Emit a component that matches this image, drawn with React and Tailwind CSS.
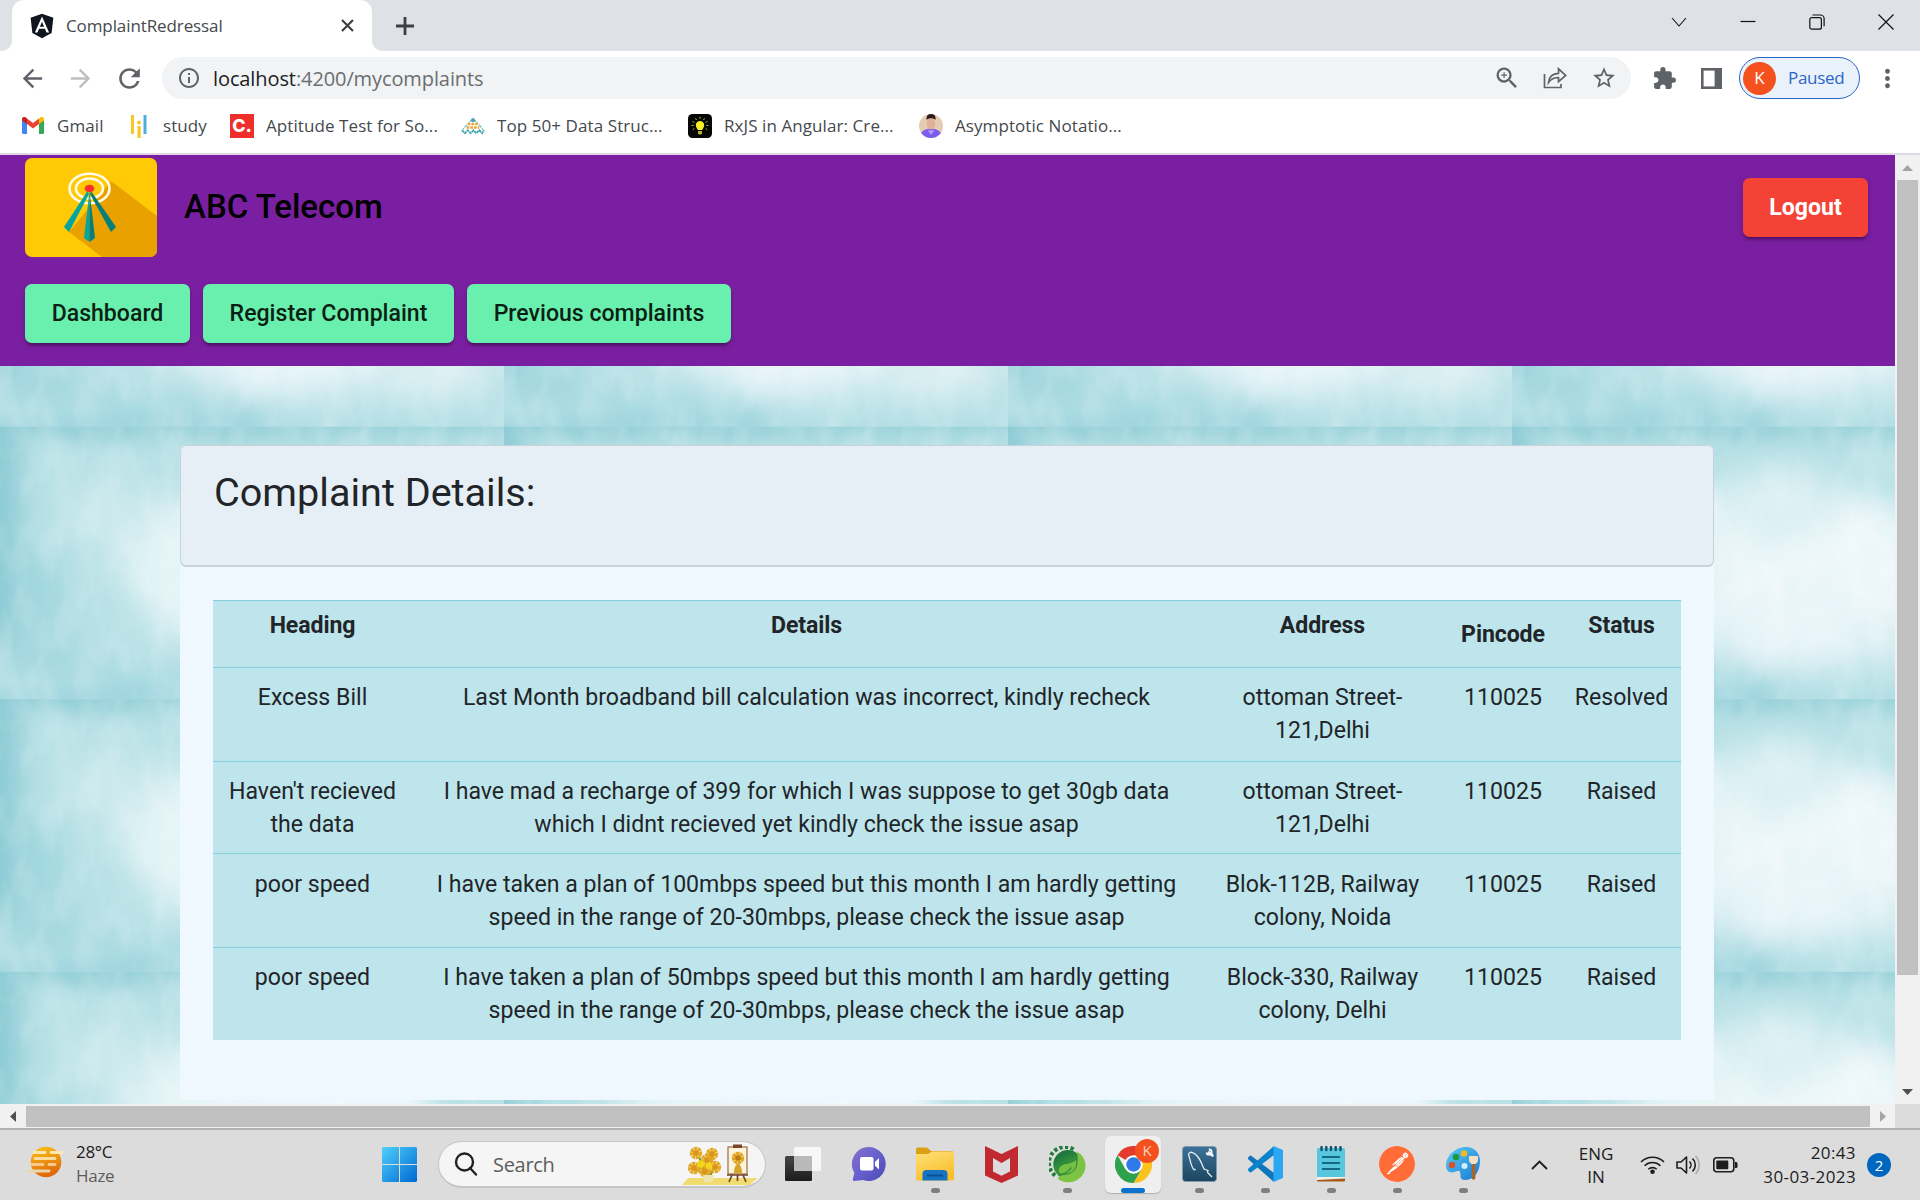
import React from "react";
import {
  MdArrowBack,
  MdArrowForward,
  MdRefresh,
  MdInfoOutline,
  MdZoomIn,
  MdStarBorder,
  MdExtension,
  MdMoreVert,
} from "react-icons/md";
import { FaAngular } from "react-icons/fa";
import { SiPostman } from "react-icons/si";

const UI = "font-['Open_Sans','Noto_Sans',sans-serif]";

/* ---------- Browser tab strip ---------- */

function TabStrip() {
  return (
    <div className="flex h-[51px] items-stretch bg-[#dee1e6]">
      <div className="flex w-[12px] items-end bg-white">
        <div className="h-full w-full rounded-br-[10px] bg-[#dee1e6]" />
      </div>
      <div className="flex w-[360px] bg-[#dee1e6]">
        <div className="flex flex-1 items-center rounded-t-[12px] bg-white pr-[16px] pl-[16px]">
          <FaAngular className="h-[28px] w-[28px] text-[#11151f]" />
          <span className="ml-[10px] flex-1 text-[17px] tracking-[-0.1px] text-[#45494d]">
            ComplaintRedressal
          </span>
          <svg width="17" height="17" viewBox="0 0 17 17" className="text-[#3c4043]">
            <path d="M3 3l11 11M14 3L3 14" stroke="currentColor" strokeWidth="2.2" />
          </svg>
        </div>
      </div>
      <div className="flex flex-1 bg-white">
        <div className="flex flex-1 rounded-bl-[10px] bg-[#dee1e6]">
          <div className="flex w-[66px] items-center justify-center">
            <svg width="20" height="20" viewBox="0 0 20 20">
              <path d="M10 1v18M1 10h18" stroke="#3c4043" strokeWidth="2.8" />
            </svg>
          </div>
          <div className="flex-1" />
          <div className="flex h-[43px] items-center">
            <div className="flex w-[69px] justify-center">
              <svg width="16" height="16" viewBox="0 0 16 16" fill="none" stroke="#111" strokeWidth="1.1">
                <path d="M1 4l7 8 7-8" />
              </svg>
            </div>
            <div className="flex w-[69px] justify-center">
              <svg width="16" height="16" viewBox="0 0 16 16" stroke="#111" strokeWidth="1.2">
                <path d="M0.5 7.500h15" />
              </svg>
            </div>
            <div className="flex w-[69px] justify-center">
              <svg width="16" height="16" viewBox="0 0 16 16" fill="none" stroke="#111" strokeWidth="1.2">
                <rect x="0.8" y="3.6" width="11.6" height="11.6" rx="2" />
                <path d="M3.5 1h8a3.6 3.6 0 0 1 3.6 3.6v7.6" />
              </svg>
            </div>
            <div className="flex w-[69px] justify-center">
              <svg width="16" height="16" viewBox="0 0 16 16" stroke="#111" strokeWidth="1.2">
                <path d="M0.5 0.5l15 15M15.5 0.5l-15 15" />
              </svg>
            </div>
          </div>
        </div>
      </div>
    </div>
  );
}

/* ---------- Address bar ---------- */

function Toolbar() {
  return (
    <div className="flex h-[54px] items-center pl-[8px] text-[#5f6368]">
      <div className="flex w-[48px] justify-center">
        <MdArrowBack size={29} />
      </div>
      <div className="flex w-[49px] justify-center text-[#bcbec1]">
        <MdArrowForward size={29} />
      </div>
      <div className="flex w-[48px] justify-center">
        <MdRefresh size={31} />
      </div>
      <div className="ml-[9px] flex h-[42px] w-[1469px] items-center rounded-full bg-[#f1f3f4] pr-[3px] pl-[15px]">
        <MdInfoOutline size={24} />
        <div className="ml-[12px] flex-1 pt-[2px] text-[20px] tracking-[-0.1px] text-[#6a6e72]">
          <span className="text-[#202124]">localhost</span>:4200/mycomplaints
        </div>
        <div className="flex w-[48.5px] justify-center">
          <MdZoomIn size={28} />
        </div>
        <div className="flex w-[48.5px] justify-center">
          <svg width="24" height="24" viewBox="0 0 24 24" fill="none" stroke="currentColor" strokeWidth="1.7">
            <path d="M1.5 8v13.5H18V18" />
            <path d="M5.5 16.5C6 11 9.500 7.500 15.500 7.300V2.800l7.200 6.700-7.200 6.200v-4.200c-4.500 0-7.500 1.600-10 5z" />
          </svg>
        </div>
        <div className="flex w-[48.5px] justify-center">
          <MdStarBorder size={26} />
        </div>
      </div>
      <div className="ml-[9px] flex w-[48px] justify-center">
        <MdExtension size={25} />
      </div>
      <div className="flex w-[47px] justify-center">
        <svg width="21" height="21" viewBox="0 0 21 21">
          <rect width="21" height="21" fill="#5f6368" />
          <rect x="2.600" y="2.600" width="11" height="15.800" fill="#fff" />
        </svg>
      </div>
      <div className="ml-[4px] flex h-[42px] w-[121px] items-center rounded-full border-[1.5px] border-[#2a66c8] bg-[#e9f1fb] pl-[3px]">
        <div className="flex h-[33px] w-[33px] items-center justify-center rounded-full bg-[#f4511e] text-[17px] text-white">
          K
        </div>
        <span className="ml-[12px] text-[17px] tracking-[-0.3px] text-[#2a66c8]">Paused</span>
      </div>
      <div className="flex flex-1 justify-center pr-[6px]">
        <MdMoreVert size={29} />
      </div>
    </div>
  );
}

/* ---------- Bookmarks ---------- */

function GmailIcon() {
  return (
    <svg width="22" height="17" viewBox="0 0 22 17">
      <path d="M0 3v12.500A1.500 1.500 0 0 0 1.500 17H5V6z" fill="#4285f4" />
      <path d="M22 3v12.500a1.500 1.500 0 0 1-1.500 1.500H17V6z" fill="#34a853" />
      <path d="M17 1.500V7l5-3.600V2.200C22 .2 19.800-.8 18.200.4z" fill="#fbbc04" />
      <path d="M5 7V1.500L11 6l6-4.500V7l-6 4.500z" fill="#ea4335" />
      <path d="M0 2.200v1.200L5 7V1.500L3.800.4C2.200-.8 0 .2 0 2.200z" fill="#c5221f" />
    </svg>
  );
}

function StudyIcon() {
  return (
    <svg width="18" height="24" viewBox="0 0 18 24">
      <rect x="1" y="1" width="3" height="19" fill="#f9c623" />
      <circle cx="9" cy="8.500" r="1.900" fill="#f9c623" />
      <rect x="7.500" y="12" width="3.200" height="12" fill="#f9c623" />
      <rect x="13.500" y="1" width="3" height="19" fill="#4badde" />
    </svg>
  );
}

function PyramidIcon() {
  return (
    <svg width="25" height="18" viewBox="0 0 25 18">
      <path d="M12.500 1L5 9M12.500 1L20 9M5 9l-4 5M20 9l4 5" stroke="#7fc1c9" strokeWidth="1.300" strokeDasharray="2 1" />
      <circle cx="12.500" cy="3" r="2.200" fill="#4aa9b5" />
      <path d="M7 7h11M6 10.500h13" stroke="#eda63f" strokeWidth="2.600" strokeDasharray="2.800 1" />
      <path d="M1 13.500l3 3 3-3 3 3 3-3 3 3 3-3 3 3 2-3" fill="none" stroke="#3fa3ae" strokeWidth="1.800" strokeDasharray="3 0.600" />
    </svg>
  );
}

function BulbIcon() {
  return (
    <svg width="24" height="24" viewBox="0 0 24 24">
      <rect width="24" height="24" rx="4.500" fill="#050505" />
      <path d="M12 7a4.200 4.200 0 0 0-4.200 4.200c0 2 1.400 3 1.900 4.800h4.600c.5-1.800 1.900-2.800 1.900-4.800A4.200 4.200 0 0 0 12 7z" fill="#f5ee27" />
      <path d="M10 17h4v2.200l-1.200 1.400h-1.600L10 19.200z" fill="#b9b425" />
      <path d="M12 2.800v2M7.500 4.200l1 1.800M16.500 4.200l-1 1.800M4.500 7.500l1.800 1M19.500 7.500l-1.800 1M3.600 11.500h2M18.400 11.500h2M4.800 15.500l1.500-.8M19.200 15.500l-1.500-.8" stroke="#b9b425" strokeWidth="1" />
    </svg>
  );
}

function AvatarIcon() {
  return (
    <svg width="24" height="24" viewBox="0 0 24 24">
      <clipPath id="avatarClip">
        <circle cx="12" cy="12" r="12" />
      </clipPath>
      <g clipPath="url(#avatarClip)">
        <rect width="24" height="24" fill="#e6cbb3" />
        <ellipse cx="12" cy="22" rx="11" ry="7.500" fill="#7a5cf0" />
        <ellipse cx="12" cy="9.500" rx="4.200" ry="6" fill="#e0b09c" />
        <path d="M7.500 6C7.500 1 9 0 12 0s5 1 4.500 6C15 3.500 9 3.500 7.500 6z" fill="#2b1c1c" />
        <path d="M8 15c2 2 6 2 8 0l-4 6z" fill="#b9a2f5" />
      </g>
    </svg>
  );
}

function LetterCIcon() {
  return (
    <div className="flex h-[24px] w-[24px] items-center justify-center bg-[#ee2f2b] font-['Inter',sans-serif] text-[18px] font-extrabold text-white">
      C.
    </div>
  );
}

const bookmarks = [
  { label: "Gmail", icon: <GmailIcon />, width: "w-[106px]" },
  { label: "study", icon: <StudyIcon />, width: "w-[103px]" },
  { label: "Aptitude Test for So...", icon: <LetterCIcon />, width: "w-[231px]" },
  { label: "Top 50+ Data Struc...", icon: <PyramidIcon />, width: "w-[227px]" },
  { label: "RxJS in Angular: Cre...", icon: <BulbIcon />, width: "w-[231px]" },
  { label: "Asymptotic Notatio...", icon: <AvatarIcon />, width: "w-[231px]" },
];

function Bookmarks() {
  return (
    <div className="flex h-[50px] items-center border-b-2 border-[#dfd6e6] pb-[7px] pl-[21px]">
      {bookmarks.map((b) => (
        <div key={b.label} className={`flex shrink-0 items-center ${b.width}`}>
          <div className="flex w-[24px] justify-center">{b.icon}</div>
          <span className="ml-[12px] text-[17px] tracking-[0.08px] whitespace-nowrap text-[#45494d]">
            {b.label}
          </span>
        </div>
      ))}
    </div>
  );
}

/* ---------- Page header ---------- */

function TelecomLogo() {
  return (
    <svg width="132" height="99" viewBox="0 0 132 99" className="rounded-[7px]">
      <rect width="132" height="99" fill="#ffc905" />
      <path d="M86 23L132 58v41H77L44 74z" fill="#e9a100" />
      <ellipse cx="64.500" cy="30.500" rx="20" ry="14.800" fill="none" stroke="#fffbe8" strokeWidth="2.600" />
      <ellipse cx="64.500" cy="30.500" rx="13.500" ry="10" fill="none" stroke="#fffbe8" strokeWidth="2.600" />
      <path d="M62.500 33L39 69l5 5 20-38z" fill="#06a6a0" />
      <path d="M66 33l25 36-5 5-21-38z" fill="#077f78" />
      <path d="M64.500 33L59 80l5.500 4z" fill="#06a6a0" />
      <path d="M64.500 33L70 80l-5.500 4z" fill="#077f78" />
      <ellipse cx="64.500" cy="30.500" rx="4.800" ry="3.800" fill="#f9332c" />
    </svg>
  );
}

const BTN_SHADOW =
  "shadow-[0_5px_2px_-3px_rgba(0,0,0,0.2),0_3px_3px_0_rgba(0,0,0,0.14),0_2px_8px_0_rgba(0,0,0,0.12)]";

function PageHeader() {
  return (
    <header className="flex h-[211px] flex-col bg-[#7b1fa2] pr-[27px] pl-[25px]">
      <div className="flex h-[129px] pt-[3px]">
        <TelecomLogo />
        <h1 className="ml-[27px] flex-1 pt-[29px] text-[33px] leading-[40px] font-medium text-black">
          ABC Telecom
        </h1>
        <button
          className={`mt-[20px] h-[59px] w-[125px] rounded-[6.6px] bg-[#f44336] pt-[2px] text-[23.1px] font-bold text-white ${BTN_SHADOW}`}
        >
          Logout
        </button>
      </div>
      <nav className="flex gap-[13px] text-[23.1px] font-medium text-[#0b1f14]">
        <button className={`h-[59px] w-[165px] rounded-[6.6px] bg-[#69f0ae] pt-[2px] ${BTN_SHADOW}`}>Dashboard</button>
        <button className={`h-[59px] w-[251px] rounded-[6.6px] bg-[#69f0ae] pt-[2px] ${BTN_SHADOW}`}>
          Register Complaint
        </button>
        <button className={`h-[59px] w-[264px] rounded-[6.6px] bg-[#69f0ae] pt-[2px] ${BTN_SHADOW}`}>
          Previous complaints
        </button>
      </nav>
    </header>
  );
}

/* ---------- Watercolour texture behind the page ---------- */

function Watercolour() {
  return (
    <svg width="1895" height="738" className="absolute inset-0">
      <defs>
        <filter id="soft" x="-50%" y="-50%" width="200%" height="200%">
          <feGaussianBlur stdDeviation="16" />
        </filter>
        <filter id="soft2" x="-50%" y="-100%" width="200%" height="300%">
          <feGaussianBlur stdDeviation="9" />
        </filter>
        <filter id="streaks" x="0" y="0" width="100%" height="100%">
          <feTurbulence type="fractalNoise" baseFrequency="0.035 0.022" numOctaves="3" seed="8" />
          <feColorMatrix values="0 0 0 0 0.45  0 0 0 0 0.74  0 0 0 0 0.79  1.600 0 0 0 -0.620" />
        </filter>
        <filter id="glints" x="0" y="0" width="100%" height="100%">
          <feTurbulence type="fractalNoise" baseFrequency="0.040 0.020" numOctaves="3" seed="21" />
          <feColorMatrix values="0 0 0 0 0.95  0 0 0 0 0.99  0 0 0 0 1  0 1.800 0 0 -0.700" />
        </filter>
        <pattern id="tile" x="0" y="-212" width="504" height="272.600" patternUnits="userSpaceOnUse">
          <rect width="504" height="272.600" fill="#b8e1e6" />
          <g filter="url(#soft)">
            <ellipse cx="255" cy="140" rx="130" ry="84" fill="#e6f4f7" />
            <ellipse cx="320" cy="150" rx="110" ry="85" fill="#eff8fb" />
            <ellipse cx="270" cy="80" rx="60" ry="40" fill="#dcf0f3" />
            <ellipse cx="172" cy="142" rx="44" ry="46" fill="#e6f5f7" />
            <ellipse cx="110" cy="90" rx="40" ry="36" fill="#cdeaed" />
            <ellipse cx="290" cy="205" rx="100" ry="36" fill="#e9f5f9" />
            <rect x="-34" y="-10" width="52" height="230" fill="#86c8d2" />
            <rect x="-20" y="-30" width="540" height="33" fill="#86c8d2" />
            <ellipse cx="45" cy="170" rx="22" ry="50" fill="#a2d7df" />
            <ellipse cx="60" cy="235" rx="60" ry="24" fill="#a6d8e0" />
            <ellipse cx="190" cy="262" rx="90" ry="13" fill="#9fd5df" />
            <ellipse cx="430" cy="215" rx="70" ry="30" fill="#dceff2" />
          </g>
          <g filter="url(#soft2)">
            <rect x="-10" y="264" width="270" height="14" fill="#98d0dc" />
            <rect x="260" y="269" width="260" height="10" fill="#b0dde4" />
            <rect x="60" y="-4" width="70" height="12" fill="#8fcbd6" />
            <rect x="200" y="-4" width="60" height="10" fill="#8fcbd6" />
          </g>
          <rect width="504" height="272.600" filter="url(#streaks)" opacity="0.160" />
          <rect width="504" height="272.600" filter="url(#glints)" opacity="0.260" />
        </pattern>
      </defs>
      <rect width="1895" height="738" fill="url(#tile)" />
    </svg>
  );
}

/* ---------- Complaint card ---------- */

const rows = [
  ["Excess Bill", "Last Month broadband bill calculation was incorrect, kindly recheck", "ottoman Street-|121,Delhi", "110025", "Resolved"],
  ["Haven't recieved|the data", "I have mad a recharge of 399 for which I was suppose to get 30gb data|which I didnt recieved yet kindly check the issue asap", "ottoman Street-|121,Delhi", "110025", "Raised"],
  ["poor speed", "I have taken a plan of 100mbps speed but this month I am hardly getting|speed in the range of 20-30mbps, please check the issue asap", "Blok-112B, Railway|colony, Noida", "110025", "Raised"],
  ["poor speed", "I have taken a plan of 50mbps speed but this month I am hardly getting|speed in the range of 20-30mbps, please check the issue asap", "Block-330, Railway|colony, Delhi", "110025", "Raised"],
];

const rowHeights = ["h-[94px] pt-[13px]", "h-[92px] pt-[13px]", "h-[94px] pt-[14px]", "h-[93px] pt-[13px]"];
const COLS = "grid grid-cols-[199px_789px_243px_118px_119px] border-t border-[#86cfda]";

function ComplaintCard() {
  return (
    <section className="relative mt-[79px] ml-[180px] h-[655px] w-[1534px] rounded-t-[6px] bg-[#f0f8ff]">
      <div className="h-[122px] rounded-[6px] border border-b-2 border-[#c9d2da] bg-[#e7eff6] pt-[19px] pl-[33px]">
        <h2 className="text-[39.6px] leading-[56px] font-normal text-[#212529]">Complaint Details:</h2>
      </div>
      <div className="mt-[33px] ml-[33px] w-[1468px] bg-[#bee5eb] text-center text-[23.1px] leading-[33px] whitespace-nowrap text-[#212529]">
        <div className={`${COLS} h-[67px] pt-[8px] font-bold tracking-[-0.1px]`}>
          <span>Heading</span>
          <span>Details</span>
          <span>Address</span>
          <span className="pt-[9px]">Pincode</span>
          <span>Status</span>
        </div>
        {rows.map((cells, r) => (
          <div key={r} className={`${COLS} ${rowHeights[r]}`}>
            {cells.map((cell, c) => (
              <div key={c}>
                {cell.split("|").map((line) => (
                  <div key={line}>{line}</div>
                ))}
              </div>
            ))}
          </div>
        ))}
      </div>
    </section>
  );
}

/* ---------- Scrollbars ---------- */

function VerticalScrollbar() {
  return (
    <div className="flex w-[25px] flex-col items-center bg-[#f1f1f1]">
      <div className="flex h-[25px] items-center">
        <svg width="11" height="6" viewBox="0 0 11 6">
          <path d="M5.500 0L11 6H0z" fill="#a3a3a3" />
        </svg>
      </div>
      <div className="h-[795px] w-[21px] bg-[#c1c1c1]" />
      <div className="flex-1" />
      <div className="flex h-[25px] items-center">
        <svg width="11" height="6" viewBox="0 0 11 6">
          <path d="M5.500 6L0 0h11z" fill="#505050" />
        </svg>
      </div>
    </div>
  );
}

function HorizontalScrollbar() {
  return (
    <div className="flex h-[26px] border-b-2 border-[#b2b2b2] bg-[#f1f1f1]">
      <div className="flex w-[26px] items-center justify-center">
        <svg width="6" height="11" viewBox="0 0 6 11">
          <path d="M0 5.500L6 0v11z" fill="#505050" />
        </svg>
      </div>
      <div className="mt-[2px] mb-[1px] w-[1844px] bg-[#c1c1c1]" />
      <div className="flex w-[25px] items-center justify-center">
        <svg width="6" height="11" viewBox="0 0 6 11">
          <path d="M6 5.500L0 0v11z" fill="#a3a3a3" />
        </svg>
      </div>
      <div className="flex-1 bg-[#dcdcdc]" />
    </div>
  );
}

/* ---------- Taskbar icons ---------- */

function WeatherIcon() {
  return (
    <svg width="36" height="34" viewBox="0 0 36 34">
      <defs>
        <linearGradient id="sun" x1="0" y1="0" x2="0.300" y2="1">
          <stop offset="0" stopColor="#fcc419" />
          <stop offset="1" stopColor="#e0690c" />
        </linearGradient>
      </defs>
      <circle cx="19" cy="17" r="15.300" fill="url(#sun)" />
      <g fill="none" strokeLinecap="round" strokeWidth="2.800">
        <path d="M7 7.500h11M24 7.500h11" stroke="#fde9b0" />
        <path d="M8 13.500h20" stroke="#fbdc9a" />
        <path d="M5 19.500h11M22 19.500h6" stroke="#f9c987" />
        <path d="M2 26h20" stroke="#ecd5a8" />
      </g>
    </svg>
  );
}

function WindowsIcon() {
  return (
    <svg width="35" height="35" viewBox="0 0 35 35">
      <defs>
        <linearGradient id="win" x1="0" y1="0" x2="1" y2="1">
          <stop offset="0" stopColor="#4fd0fb" />
          <stop offset="1" stopColor="#0069d2" />
        </linearGradient>
      </defs>
      <path d="M1 0h16v17H0V1zM18 0h16l1 1v16H18zM0 18h17v17H1l-1-1zM18 18h17v16l-1 1H18z" fill="url(#win)" />
    </svg>
  );
}

function SunflowerArt() {
  const petals = [
    [15, 10], [26, 17], [13, 25], [31, 11], [34, 24], [24, 28],
  ];
  return (
    <svg width="80" height="43" viewBox="0 0 80 43">
      <path d="M7 35h70L68 42H1z" fill="#f1dc72" />
      <path d="M18 14l9 22M14 26l12 6M31 14l-4 20M33 25l-5 10" stroke="#6f9432" strokeWidth="2" />
      {petals.map(([x, y]) => (
        <g key={`${x}-${y}`}>
          <circle cx={x} cy={y} r="4.200" fill="none" stroke="#e5a824" strokeWidth="4" strokeDasharray="3 0.500" />
          <circle cx={x} cy={y} r="2.800" fill="#d9961a" />
        </g>
      ))}
      <circle cx="20" cy="21" r="3.800" fill="#f4d31c" />
      <circle cx="28" cy="23" r="3.400" fill="#f4d31c" />
      <path d="M22 32h11l-1.500 7h-8z" fill="#efe3b0" />
      <rect x="47" y="4" width="19" height="27" fill="#fbf4dc" stroke="#a06a3e" strokeWidth="1.200" />
      <rect x="52" y="1.500" width="9" height="3.500" fill="#74452a" />
      <circle cx="57" cy="15" r="4.200" fill="none" stroke="#e4a41c" strokeWidth="4" strokeDasharray="3 0.500" />
      <circle cx="57" cy="15" r="2.800" fill="#b97b16" />
      <path d="M53 30c0-6 2-8 4-10 2 2 4 4 4 10z" fill="#d8a423" />
      <path d="M46 32h21M51 32l-3 7M62 32l3 7M56.500 32v6" stroke="#74452a" strokeWidth="1.700" />
    </svg>
  );
}

function TaskViewIcon() {
  return (
    <svg width="36" height="36" viewBox="0 0 36 36">
      <defs>
        <linearGradient id="tvd" x1="0" y1="0" x2="0" y2="1">
          <stop offset="0" stopColor="#454545" />
          <stop offset="1" stopColor="#1c1c1c" />
        </linearGradient>
      </defs>
      <rect x="0" y="10" width="27" height="25" rx="1.500" fill="url(#tvd)" />
      <rect x="9" y="1" width="27" height="24" rx="1.500" fill="#f7f7f7" />
      <path d="M9 10h18v15H10.500L9 23.500z" fill="#b9b9b9" />
    </svg>
  );
}

function ChatIcon() {
  return (
    <svg width="35" height="36" viewBox="0 0 35 36">
      <defs>
        <linearGradient id="chat" x1="0" y1="0" x2="1" y2="1">
          <stop offset="0" stopColor="#8a70c9" />
          <stop offset="0.450" stopColor="#6a62cf" />
          <stop offset="1" stopColor="#4b49b5" />
        </linearGradient>
      </defs>
      <path d="M17.500 1A17 17 0 1 1 11 34L2 35c-1 0-1.500-.7-1.200-1.700l1.600-6.500A17 17 0 0 1 17.500 1z" fill="url(#chat)" />
      <rect x="8" y="11" width="13.500" height="13.500" rx="2" fill="#fff" />
      <path d="M23 16l4-4v11.500l-4-4z" fill="#fff" />
    </svg>
  );
}

function FolderIcon() {
  return (
    <svg width="38" height="34" viewBox="0 0 38 34">
      <defs>
        <linearGradient id="fold" x1="0" y1="0" x2="0.400" y2="1">
          <stop offset="0" stopColor="#ffe07c" />
          <stop offset="1" stopColor="#f9bf2b" />
        </linearGradient>
      </defs>
      <path d="M0 2a1.500 1.500 0 0 1 1.500-1.500H11l4 3.500h20.500A2 2 0 0 1 37.500 6v5H0z" fill="#dba013" />
      <path d="M0 7h12l4-2.500h21a1 1 0 0 1 1 1V32a1.500 1.500 0 0 1-1.500 1.500h-35A1.500 1.500 0 0 1 0 32z" fill="url(#fold)" />
      <path d="M6.500 33.500V27a4 4 0 0 1 4-4h17a4 4 0 0 1 4 4v6.500z" fill="#1673c2" />
      <path d="M11 28.500h16" stroke="#0b4f93" strokeWidth="2" />
    </svg>
  );
}

function McAfeeIcon() {
  return (
    <svg width="33" height="37" viewBox="0 0 33 37">
      <path d="M0 0l16.500 8L33 0v29.500L16.500 37 0 29.500zM8 12v13.500l8.500 4.200 8.500-4.200V12l-8.500 5z" fill="#c2282f" fillRule="evenodd" />
    </svg>
  );
}

function SpringIcon() {
  return (
    <svg width="37" height="37" viewBox="0 0 37 37">
      <defs>
        <linearGradient id="spr" x1="0.200" y1="0" x2="0.700" y2="1">
          <stop offset="0.200" stopColor="#1e7b3c" />
          <stop offset="0.600" stopColor="#3f9a3c" />
          <stop offset="1" stopColor="#6dba42" />
        </linearGradient>
      </defs>
      <path d="M6 29.500A16 16 0 1 1 26 4.500" fill="none" stroke="#1e7b3c" strokeWidth="4" strokeDasharray="3.200 2.400" />
      <circle cx="18.800" cy="18.500" r="14.500" fill="url(#spr)" />
      <path d="M28 5.500c10 6 11 18 4 25.500-6 6.500-16 7-23 2 0-2 1-3 2-3 14-2 20-9 17-24.500z" fill="#7cc444" />
      <path d="M27.500 13c1.500 8-2 14-9.500 15-4 .5-7 0-8.500-.8C8 21 12 18.500 17 17.500c4.500-.9 8-2 10.500-4.500z" fill="#74bf42" stroke="#27823b" strokeWidth="0.900" />
      <path d="M9.500 29.500c5-1 10-4 13-8" fill="none" stroke="#27823b" strokeWidth="1.200" />
    </svg>
  );
}

function ChromeIcon() {
  return (
    <svg width="37" height="37" viewBox="0 0 48 48">
      <path d="M24 24L3.200 12A24 24 0 0 1 44.800 12z" fill="#e33b2e" />
      <path d="M24 12h20.800A24 24 0 0 1 24 48l10.400-18z" fill="#fcc31e" />
      <path d="M13.600 30L3.200 12A24 24 0 0 0 24 48l10.400-18z" fill="#2da14c" />
      <circle cx="24" cy="24" r="12" fill="#fff" />
      <circle cx="24" cy="24" r="9.400" fill="#2f79ea" />
    </svg>
  );
}

function WorkbenchIcon() {
  return (
    <svg width="35" height="36" viewBox="0 0 35 36">
      <defs>
        <linearGradient id="wb" x1="0" y1="0" x2="0" y2="1">
          <stop offset="0" stopColor="#3d7299" />
          <stop offset="1" stopColor="#1c455f" />
        </linearGradient>
      </defs>
      <rect x="0.500" y="0.500" width="34" height="35" rx="3" fill="url(#wb)" stroke="#7f9cae" />
      <path d="M13.500 23c-1.500 2-2 0-3-1.500C8 17 8 12 6.500 8.500 8 4 13 7 16 11c3.500 4.500 4 8 6 12l4 1.500c-1 1-1 1.500 0 2.500l4 4" fill="none" stroke="#e3edf3" strokeWidth="1.300" />
      <path d="M30.500 9.500l-3.500-3" stroke="#f4f8fa" strokeWidth="2.600" strokeLinecap="round" />
      <path d="M24.500 6.500a2.600 2.600 0 1 0 2.300-3" fill="none" stroke="#f4f8fa" strokeWidth="1.800" />
    </svg>
  );
}

function VsCodeIcon() {
  return (
    <svg width="36" height="36" viewBox="0 0 36 36">
      <path d="M1 11.500l2.500-2.300L27 27v9L1.200 13.200z" fill="#0f75bd" />
      <path d="M1 24.500l2.500 2.300L27 9V0L1.200 22.800z" fill="#0b83cd" />
      <path d="M26.500 0L36 4v28l-9.500 4z" fill="#2aa7f2" />
    </svg>
  );
}

function NotepadIcon() {
  return (
    <svg width="28" height="36" viewBox="0 0 28 36">
      <rect x="0" y="2" width="28" height="30" rx="1.500" fill="#57c7de" />
      <path d="M0 31h28v3.500a1 1 0 0 1-1 1H1a1 1 0 0 1-1-1z" fill="#a55a18" />
      <path d="M0 31h28v1.500L0 34z" fill="#f3f0ea" />
      <path d="M4.500 1v3M9.300 1v3M14 1v3M18.700 1v3M23.500 1v3" stroke="#14506a" strokeWidth="2.400" strokeLinecap="round" />
      <path d="M5 11h18M5 17h18M5 23h18" stroke="#116a87" strokeWidth="2" />
    </svg>
  );
}

function PaintIcon() {
  return (
    <svg width="35" height="36" viewBox="0 0 35 36">
      <defs>
        <linearGradient id="pal" x1="0" y1="0" x2="1" y2="1">
          <stop offset="0" stopColor="#56cdf4" />
          <stop offset="1" stopColor="#1b78d2" />
        </linearGradient>
      </defs>
      <path d="M20 1c8 0 14 6 14 14 0 12-7 19-15 19-6 0-4-5-5-8-1-2.500-3-1-6 0-4 1.500-8-1-8-6C0 10 9 1 20 1z" fill="url(#pal)" />
      <circle cx="10" cy="11" r="3.200" fill="#1b9a3a" />
      <circle cx="18" cy="7.500" r="3.200" fill="#f3b921" />
      <circle cx="6" cy="19" r="3.200" fill="#d9502b" />
      <circle cx="18.500" cy="20" r="3" fill="#cfeefb" />
      <path d="M23 10h9v4c0 2-1.500 3-2.500 4h-4c-1-1-2.500-2-2.500-4z" fill="#f1e0c1" />
      <path d="M25.800 18h3.600v14a1.800 1.800 0 0 1-3.600 0z" fill="#a5652b" />
    </svg>
  );
}

function ChromeApp() {
  return (
    <div className="relative flex h-[57px] w-[56px] items-center justify-center rounded-[6px] bg-[#efefef] shadow-[0_1px_1px_rgba(0,0,0,0.2)]">
      <ChromeIcon />
      <span className="absolute top-[3px] right-[2px] flex h-[24px] w-[24px] items-center justify-center rounded-full bg-[#f4511e] text-[15px] text-[#fbd3c5]">
        K
      </span>
    </div>
  );
}

function PostmanIcon() {
  return (
    <div className="flex h-[36px] w-[36px] items-center justify-center rounded-full bg-white">
      <SiPostman size={36} className="text-[#ff6c37]" />
    </div>
  );
}

const apps = [
  { id: "taskview", icon: <TaskViewIcon />, mark: "none" },
  { id: "chat", icon: <ChatIcon />, mark: "none" },
  { id: "files", icon: <FolderIcon />, mark: "dot" },
  { id: "mcafee", icon: <McAfeeIcon />, mark: "none" },
  { id: "spring", icon: <SpringIcon />, mark: "dot" },
  { id: "chrome", icon: <ChromeApp />, mark: "bar" },
  { id: "workbench", icon: <WorkbenchIcon />, mark: "dot" },
  { id: "vscode", icon: <VsCodeIcon />, mark: "dot" },
  { id: "notepad", icon: <NotepadIcon />, mark: "dot" },
  { id: "postman", icon: <PostmanIcon />, mark: "dot" },
  { id: "paint", icon: <PaintIcon />, mark: "dot" },
];

const marks = {
  none: "hidden",
  dot: "w-[9px] bg-[#7f7f7f]",
  bar: "w-[24px] bg-[#0a72cf]",
};

function Taskbar() {
  return (
    <footer className="flex h-[70px] items-stretch bg-[#dcdcdc] text-[#1d1d1d]">
      <div className="flex w-[382px] pl-[27px]">
        <div className="pt-[15px]">
          <WeatherIcon />
        </div>
        <div className="ml-[13px] pt-[10px] text-[17px] leading-[24px] tracking-[-0.3px]">
          <div>28°C</div>
          <div className="text-[#5c5c5c]">Haze</div>
        </div>
      </div>
      <div className="pt-[17px]">
        <WindowsIcon />
      </div>
      <div className="mt-[11px] ml-[21px] flex h-[47px] w-[328px] items-center rounded-full border border-b-2 border-[#c6c6c6] bg-[#f5f5f5] pl-[15px]">
        <svg width="24" height="24" viewBox="0 0 24 24" fill="none" stroke="#222" strokeWidth="2.400">
          <circle cx="10.500" cy="10" r="8.500" />
          <path d="M16 16l6 6.500" strokeLinecap="round" />
        </svg>
        <span className="ml-[15px] flex-1 pt-[2px] text-[20px] tracking-[-0.3px] text-[#5e5e5e]">Search</span>
        <div className="mr-[4px]">
          <SunflowerArt />
        </div>
      </div>
      <div className="ml-[4px] flex">
        {apps.map((app) => (
          <div key={app.id} className="relative flex w-[66px] items-center justify-center pb-[2px]">
            {app.icon}
            <span className={`absolute bottom-[7px] h-[5px] rounded-full ${marks[app.mark]}`} />
          </div>
        ))}
      </div>
      <div className="ml-[35px] flex flex-1 items-center">
        <svg width="17" height="10" viewBox="0 0 17 10" fill="none" stroke="#1d1d1d" strokeWidth="1.900">
          <path d="M1 9l7.500-7.500L16 9" />
        </svg>
        <div className="ml-[24px] w-[48px] text-center text-[17px] leading-[23px] tracking-[-0.1px]">
          <div>ENG</div>
          <div>IN</div>
        </div>
        <svg width="25" height="20" viewBox="0 0 25 20" fill="none" stroke="#1d1d1d" strokeWidth="1.600" className="ml-[20px]">
          <path d="M1 7a16.300 16.300 0 0 1 23 0M4.600 10.800a11.200 11.200 0 0 1 15.800 0M8.300 14.300a6 6 0 0 1 8.400 0" />
          <circle cx="12.500" cy="16.800" r="1.500" fill="#1d1d1d" />
        </svg>
        <svg width="25" height="22" viewBox="0 0 25 22" fill="none" stroke="#1d1d1d" strokeWidth="1.600" className="ml-[11px]">
          <path d="M1 8v6h4l5.500 5V3L5 8z" strokeLinejoin="round" />
          <path d="M13.500 7.500a5 5 0 0 1 0 7M16.500 4.500a9 9 0 0 1 0 13" />
          <path d="M19.500 2a13 13 0 0 1 0 18" stroke="#aaa" />
        </svg>
        <svg width="25" height="16" viewBox="0 0 25 16" className="ml-[12px]">
          <rect x="0.800" y="0.800" width="20" height="14" rx="3" fill="none" stroke="#1d1d1d" strokeWidth="1.600" />
          <rect x="3.300" y="3.500" width="12" height="8.800" rx="1" fill="#1d1d1d" />
          <path d="M22 5h1a1.500 1.500 0 0 1 1.500 1.500v3A1.500 1.500 0 0 1 23 11h-1z" fill="#1d1d1d" />
        </svg>
        <div className="w-[118px] text-right text-[17px] leading-[24px] tracking-[0.400px]">
          <div>20:43</div>
          <div>30-03-2023</div>
        </div>
        <div className="ml-[11px] flex h-[24px] w-[24px] items-center justify-center rounded-full bg-[#0067c0] text-[15px] text-white">
          2
        </div>
      </div>
    </footer>
  );
}

export default function App() {
  return (
    <div className={`flex h-[1200px] w-[1920px] flex-col overflow-hidden bg-white ${UI}`}>
      <TabStrip />
      <Toolbar />
      <Bookmarks />
      <div className="flex h-[949px]">
        <main className="flex w-[1895px] flex-col overflow-hidden font-['Roboto',sans-serif]">
          <PageHeader />
          <div className="relative h-[738px] overflow-hidden">
            <Watercolour />
            <ComplaintCard />
          </div>
        </main>
        <VerticalScrollbar />
      </div>
      <HorizontalScrollbar />
      <Taskbar />
    </div>
  );
}
